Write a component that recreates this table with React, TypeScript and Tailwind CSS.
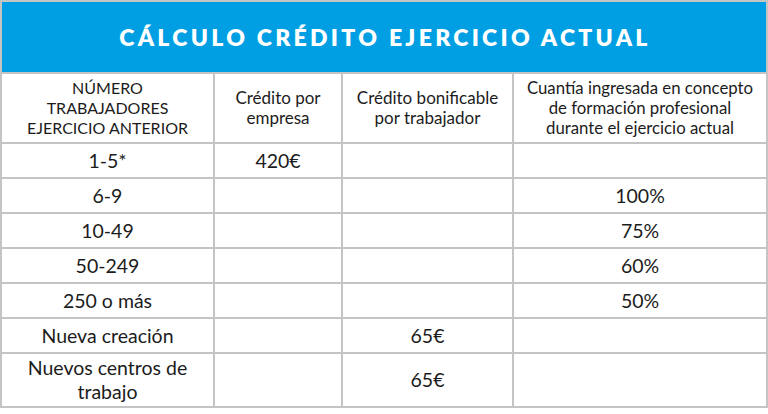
const ROWS: [string, string, string, string][] = [
  ["1-5*", "420€", "", ""],
  ["6-9", "", "", "100%"],
  ["10-49", "", "", "75%"],
  ["50-249", "", "", "60%"],
  ["250 o más", "", "", "50%"],
  ["Nueva creación", "", "65€", ""],
  ["Nuevos centros de trabajo", "", "65€", ""],
];

function Cell({ children, tall }: { children?: React.ReactNode; tall?: boolean }) {
  return (
    <div
      className={`bg-white flex items-center justify-center text-center text-[19.5px] leading-[24px] text-[#1c1c1c] px-2 ${
        tall ? "h-[52px]" : "h-[33px]"
      }`}
    >
      {children}
    </div>
  );
}

export default function App() {
  return (
    <div className="w-[768px] h-[414px] bg-white font-['Lato','Liberation_Sans',sans-serif]">
      <div className="grid grid-cols-[211px_126px_169px_252px] gap-[2px] p-[2px] bg-[#c4c4c4] w-[768px]">
        {/* title */}
        <div className="col-span-4 h-[70px] bg-[#009fe3] flex items-center justify-center">
          <h1 className="text-white font-extrabold text-[23px] tracking-[3.3px] pl-[2px]">
            CÁLCULO CRÉDITO EJERCICIO ACTUAL
          </h1>
        </div>

        {/* header row */}
        <div className="bg-white h-[68px] flex items-center justify-center text-center text-[16px] leading-[20px] text-[#1c1c1c]">
          NÚMERO
          <br />
          TRABAJADORES
          <br />
          EJERCICIO ANTERIOR
        </div>
        <div className="bg-white h-[68px] flex items-center justify-center text-center text-[17px] leading-[20px] text-[#1c1c1c]">
          Crédito por
          <br />
          empresa
        </div>
        <div className="bg-white h-[68px] flex items-center justify-center text-center text-[17px] leading-[20px] text-[#1c1c1c]">
          Crédito bonificable
          <br />
          por trabajador
        </div>
        <div className="bg-white h-[68px] flex items-center justify-center text-center text-[16.8px] leading-[20px] text-[#1c1c1c]">
          Cuantía ingresada en concepto
          <br />
          de formación profesional
          <br />
          durante el ejercicio actual
        </div>

        {/* body */}
        {ROWS.map((r, i) => {
          const tall = i === ROWS.length - 1;
          return (
            <div key={i} className="contents">
              <Cell tall={tall}>
                {tall ? (
                  <span>
                    Nuevos centros de
                    <br />
                    trabajo
                  </span>
                ) : (
                  r[0]
                )}
              </Cell>
              <Cell tall={tall}>{r[1]}</Cell>
              <Cell tall={tall}>{r[2]}</Cell>
              <Cell tall={tall}>{r[3]}</Cell>
            </div>
          );
        })}
      </div>
    </div>
  );
}
